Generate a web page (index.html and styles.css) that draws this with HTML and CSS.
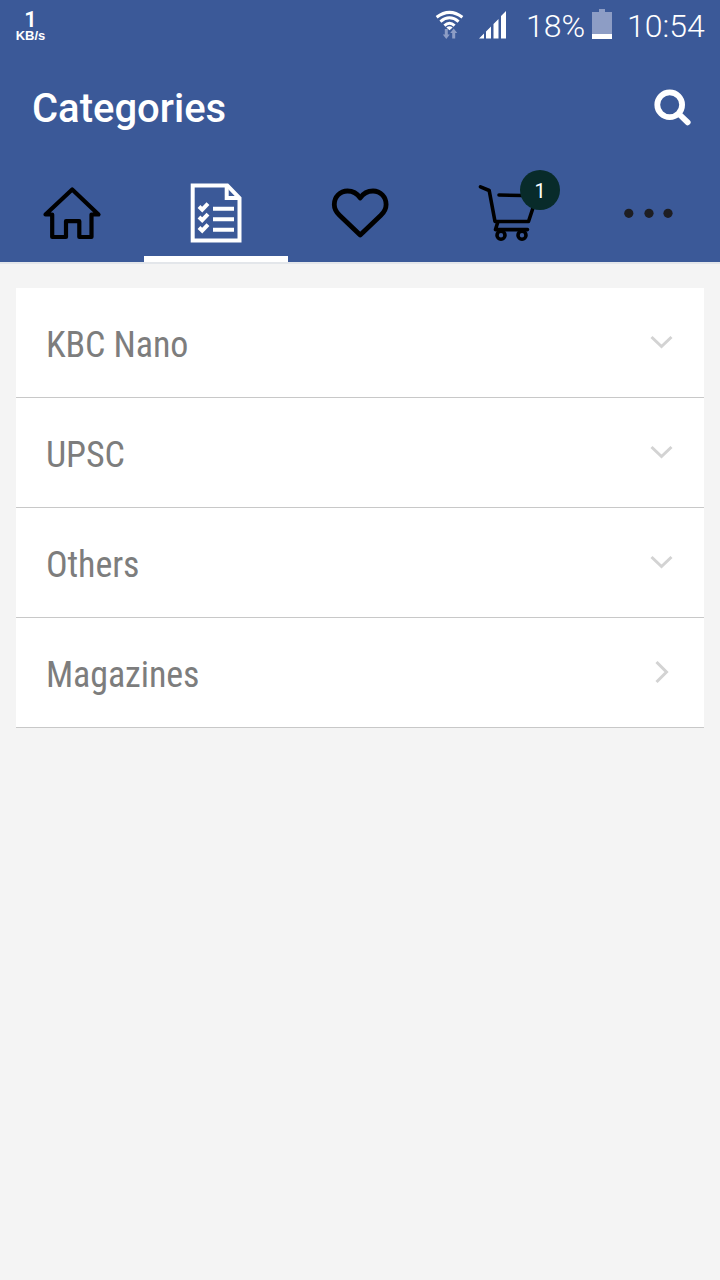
FILE: index.html
```html
<!DOCTYPE html>
<html lang="en">
<head>
  <meta charset="UTF-8">
  <meta name="viewport" content="width=device-width, initial-scale=1.0">
  <title>Categories</title>
  <link rel="stylesheet" href="styles.css">
</head>
<body>

  <header class="header">
    <div class="status-bar">
      <div class="speed">
        <span class="speed-value">1</span>
        <span class="speed-unit">KB/s</span>
      </div>
      <svg class="wifi" width="30" height="32" viewBox="435 9 30 32">
        <g fill="none" stroke="#fff" stroke-width="3">
          <path d="M436.600 17.300Q449.500 7.500 462.400 17.300"/>
          <path d="M440.400 21.600Q449.500 14 458.600 21.600"/>
          <path d="M444.400 25.600Q449.500 21 454.600 25.600"/>
        </g>
        <path d="M446.300 27.400Q449.500 25 452.700 27.400L449.500 30.200Z" fill="#fff"/>
        <path d="M444.800 29h3v5.500h2l-3.500 4.500l-3.500 -4.500h2zM452.200 38.500h3v-5.500h2l-3.500 -4.500l-3.500 4.500h2z" fill="#8d9dc5"/>
      </svg>
      <svg class="signal" width="28" height="29" viewBox="0 0 28 29">
        <path d="M0 28.500L5 23.500V28.500ZM7 21.500L12 16.500V28.500H7ZM14.500 14L19.500 9V28.500H14.500ZM22 6L27 1V28.500H22Z" fill="#fff"/>
      </svg>
      <span class="percent">18%</span>
      <svg class="battery" width="20" height="30" viewBox="0 0 20 30">
        <path d="M7 0h6v3h7v27H0V3h7z" fill="#8d9dc5"/>
        <path d="M0 25h20v5H0z" fill="#fff"/>
      </svg>
      <span class="clock">10:54</span>
    </div>

    <div class="title-bar">
      <h1 class="title">Categories</h1>
      <svg class="search" width="40" height="40" viewBox="652 87 40 40">
        <g fill="none" stroke="#fff" stroke-width="5.800" stroke-linecap="round">
          <circle cx="669.700" cy="104.700" r="12.400"/>
          <path d="M679.500 114.500L687.700 122.300"/>
        </g>
      </svg>
    </div>

    <nav class="tabs">
      <a class="tab">
        <svg width="144" height="98" viewBox="0 164 144 98">
          <path d="M72.200 189.500L98.500 214.500H91.500V237H79.300V221.200H66V237H52.200V214.500H45.500Z" fill="none" stroke="#000" stroke-width="4.200" stroke-linejoin="round"/>
        </svg>
      </a>
      <a class="tab active">
        <svg width="144" height="98" viewBox="144 164 144 98">
          <g fill="none" stroke="#fff" stroke-width="4">
            <path d="M192.700 185.400H227.300L239.500 198V240.500H192.700Z"/>
            <path d="M226.700 186V198H239"/>
            <path d="M213 208.700H234M213 219.200H234M213 229.700H234"/>
            <path d="M199 206.500L202.200 209.600L208 203.600M199 217L202.200 220.100L208 214.100M199 227.500L202.200 230.600L208 224.600"/>
          </g>
        </svg>
      </a>
      <a class="tab">
        <svg width="144" height="98" viewBox="288 164 144 98">
          <path d="M360.200 235L339.500 215.300C335.500 211.500 334.300 208.500 334.300 204.500C334.300 197 340 191 347.500 191C353 191 357.200 193.500 360.200 198C363.200 193.500 367.500 191 373 191C380.500 191 386.100 197 386.100 204.500C386.100 208.500 384.900 211.500 380.900 215.300Z" fill="none" stroke="#000" stroke-width="4.800" stroke-linejoin="round"/>
        </svg>
      </a>
      <a class="tab">
        <svg width="144" height="98" viewBox="432 164 144 98">
          <g fill="none" stroke="#000" stroke-width="3.600" stroke-linecap="round" stroke-linejoin="round">
            <path d="M480.500 186.800L489.200 190.500L495 221.500H528.500L537 195.800L499 195"/>
            <path d="M497.500 223L495.500 229.600H527.500"/>
            <circle cx="501" cy="235.200" r="4"/>
            <circle cx="522" cy="235.200" r="4"/>
          </g>
        </svg>
        <span class="badge">1</span>
      </a>
      <a class="tab">
        <svg width="144" height="98" viewBox="576 164 144 98">
          <g fill="#1e1e22">
            <circle cx="628.800" cy="213.300" r="4.600"/>
            <circle cx="649" cy="213.300" r="4.600"/>
            <circle cx="668" cy="213.300" r="4.600"/>
          </g>
        </svg>
      </a>
    </nav>
  </header>

  <ul class="categories">
    <li class="category">
      <span>KBC Nano</span>
      <svg class="arrow" width="26" height="26" viewBox="0 0 26 26"><path d="M3.500 8L13.500 17.500L23.500 8"/></svg>
    </li>
    <li class="category">
      <span>UPSC</span>
      <svg class="arrow" width="26" height="26" viewBox="0 0 26 26"><path d="M3.500 8L13.500 17.500L23.500 8"/></svg>
    </li>
    <li class="category">
      <span>Others</span>
      <svg class="arrow" width="26" height="26" viewBox="0 0 26 26"><path d="M3.500 8L13.500 17.500L23.500 8"/></svg>
    </li>
    <li class="category">
      <span>Magazines</span>
      <svg class="arrow" width="26" height="26" viewBox="0 0 26 26"><path d="M8.500 3L18.500 13L8.500 23"/></svg>
    </li>
  </ul>

</body>
</html>
```
FILE: styles.css
```css
* {
  margin: 0;
  padding: 0;
  box-sizing: border-box;
}

body {
  font-family: Roboto, sans-serif;
  background-color: #f4f4f4;
}

svg {
  display: block;
  flex-shrink: 0;
}

.header {
  height: 264px;
  background-color: #3b5998;
  border-bottom: 2px solid #e3e6ea;
  color: #fff;
}

.status-bar {
  display: flex;
  height: 50px;
  padding: 9px 15px 0;
  font-size: 32px;
  font-weight: 340;
  line-height: 34px;
}

.speed {
  display: flex;
  flex-direction: column;
  align-items: center;
  width: 31px;
  margin-right: auto;
  font-family: "Liberation Sans", sans-serif;
  font-weight: bold;
}

.speed-value {
  font-family: Roboto, sans-serif;
  font-size: 22px;
  font-weight: 600;
  line-height: 21px;
}

.speed-unit {
  font-size: 13px;
  line-height: 11px;
}

.signal {
  margin: 1px 0 0 14px;
}

.percent {
  width: 60px;
  margin-left: 19px;
}

.battery {
  margin-left: 6px;
}

.clock {
  width: 78px;
  margin-left: 15px;
}

.title-bar {
  display: flex;
  align-items: center;
  justify-content: space-between;
  height: 114px;
  padding: 0 28px 0 32px;
}

.title {
  margin-top: 4px;
  font-size: 40px;
  font-weight: 500;
  line-height: 48px;
}

.tabs {
  display: flex;
  height: 98px;
}

.tab {
  position: relative;
  width: 144px;
  height: 98px;
}

.tab.active {
  border-bottom: 6px solid #fff;
}

.badge {
  position: absolute;
  top: 6px;
  left: 88px;
  width: 40px;
  height: 40px;
  border-radius: 50%;
  background-color: #082b2a;
  font-size: 20px;
  line-height: 43px;
  text-align: center;
}

.categories {
  margin: 24px 16px;
  list-style: none;
}

.category {
  display: flex;
  align-items: center;
  justify-content: space-between;
  height: 110px;
  padding: 4px 30px 0;
  background-color: #fff;
  border-bottom: 1px solid #c8c8c8;
  font-family: "Roboto Condensed", Roboto, sans-serif;
  font-size: 36px;
  font-stretch: 75%;
  letter-spacing: -0.1px;
  color: #7d7d7d;
}

.arrow {
  margin-top: -5px;
  fill: none;
  stroke: #d3d3d3;
  stroke-width: 3;
}
```
